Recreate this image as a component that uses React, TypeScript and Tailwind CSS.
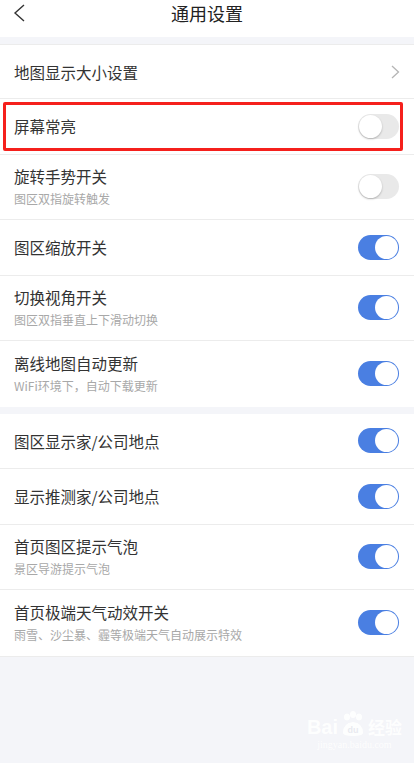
import React from 'react'

const FONT = { fontFamily: '"Noto Sans CJK SC", "Noto Sans", sans-serif' }

type Row = { title: string; sub?: string; on: boolean; highlight?: boolean }

const GROUP_A: Row[] = [
  { title: '屏幕常亮', on: false, highlight: true },
  { title: '旋转手势开关', sub: '图区双指旋转触发', on: false },
  { title: '图区缩放开关', on: true },
  { title: '切换视角开关', sub: '图区双指垂直上下滑动切换', on: true },
  { title: '离线地图自动更新', sub: 'WiFi环境下，自动下载更新', on: true },
]

const GROUP_B: Row[] = [
  { title: '图区显示家/公司地点', on: true },
  { title: '显示推测家/公司地点', on: true },
  { title: '首页图区提示气泡', sub: '景区导游提示气泡', on: true },
  { title: '首页极端天气动效开关', sub: '雨雪、沙尘暴、霾等极端天气自动展示特效', on: true },
]

function Toggle({ on }: { on: boolean }) {
  return on ? (
    <div className="w-[41px] h-[25px] rounded-full bg-[#4a7fe2] flex items-center justify-end pr-[1px]">
      <div className="w-[23px] h-[23px] rounded-full bg-white" />
    </div>
  ) : (
    <div className="w-[41px] h-[25px] rounded-full bg-[#e9e9e9] flex items-center pl-[1px]">
      <div className="w-[23px] h-[23px] rounded-full bg-white shadow-[0_1px_2px_rgba(0,0,0,0.25)]" />
    </div>
  )
}

function SettingRow({ row, last }: { row: Row; last: boolean }) {
  const height = row.sub ? 'h-[65.5px]' : 'h-[55.5px]'
  return (
    <div className={`${height} flex items-center px-[14px] ${last ? '' : 'border-b border-[#ececec]'} ${row.highlight ? 'relative' : ''}`}>
      {row.highlight && (
        <div className="absolute left-[3px] right-[11px] top-[3px] bottom-[3px] border-[3px] border-[#f5201c] rounded-[2px]" />
      )}
      <div className="flex-1 flex flex-col">
        <span className="text-[15.5px] leading-[20px] text-[#333]">{row.title}</span>
        {row.sub && (
          <span className="text-[12px] leading-[16px] mt-[5px] text-[#a8a8a8]">{row.sub}</span>
        )}
      </div>
      <div className="mr-[1px]">
        <Toggle on={row.on} />
      </div>
    </div>
  )
}

export default function App() {
  return (
    <div className="w-[414px] h-[763px] bg-[#f4f5f9] flex flex-col overflow-hidden relative" style={FONT}>
      {/* Header */}
      <header className="h-[37px] bg-white flex items-center relative">
        <svg className="absolute left-[13px] top-[4px]" width="13" height="18" viewBox="0 0 13 18" fill="none">
          <path d="M11 1 L2 9 L11 17" stroke="#333" strokeWidth="1.4" />
        </svg>
        <h1 className="flex-1 text-center text-[18px] leading-[24px] text-[#222] -mt-[12px]">通用设置</h1>
      </header>

      {/* Group 1 */}
      <section className="mt-[7px] bg-white border-t border-[#ececec]">
        <div className="h-[54px] flex items-center px-[14px] border-b border-[#ececec]">
          <span className="flex-1 text-[15.5px] leading-[20px] text-[#333]">地图显示大小设置</span>
          <svg width="9" height="14" viewBox="0 0 9 14" fill="none">
            <path d="M1 1 L7.5 7 L1 13" stroke="#b5b5b5" strokeWidth="1.3" />
          </svg>
        </div>
        {GROUP_A.map((row, i) => (
          <SettingRow key={row.title} row={row} last={i === GROUP_A.length - 1} />
        ))}
      </section>

      {/* Group 2 */}
      <section className="mt-[7px] bg-white border-b border-[#ececec]">
        {GROUP_B.map((row, i) => (
          <SettingRow key={row.title} row={row} last={i === GROUP_B.length - 1} />
        ))}
      </section>

      {/* Watermark */}
      <div className="absolute right-[12px] bottom-[12px] flex flex-col items-center text-white opacity-90 select-none">
        <div className="flex items-end gap-[2px]">
          <span className="text-[20px] leading-[20px] font-bold" style={{ fontFamily: '"Liberation Sans", sans-serif' }}>Bai</span>
          <svg width="26" height="26" viewBox="0 0 26 26">
            <ellipse cx="7" cy="6" rx="3" ry="3.5" fill="#fff" />
            <ellipse cx="13" cy="3.5" rx="3" ry="3.5" fill="#fff" />
            <ellipse cx="19" cy="6" rx="3" ry="3.5" fill="#fff" />
            <path d="M3 22 Q3 12 13 11 Q23 12 23 22 Q23 25 13 25 Q3 25 3 22 Z" fill="#fff" />
            <text x="13" y="22" fontSize="9" textAnchor="middle" fill="#e8eaf0" fontFamily="Liberation Sans, sans-serif" fontWeight="bold">du</text>
          </svg>
          <span className="text-[17px] leading-[20px] font-bold">经验</span>
        </div>
        <span className="text-[10px] leading-[12px] mt-[2px]" style={{ fontFamily: '"Liberation Serif", serif' }}>jingyan.baidu.com</span>
      </div>
    </div>
  )
}
